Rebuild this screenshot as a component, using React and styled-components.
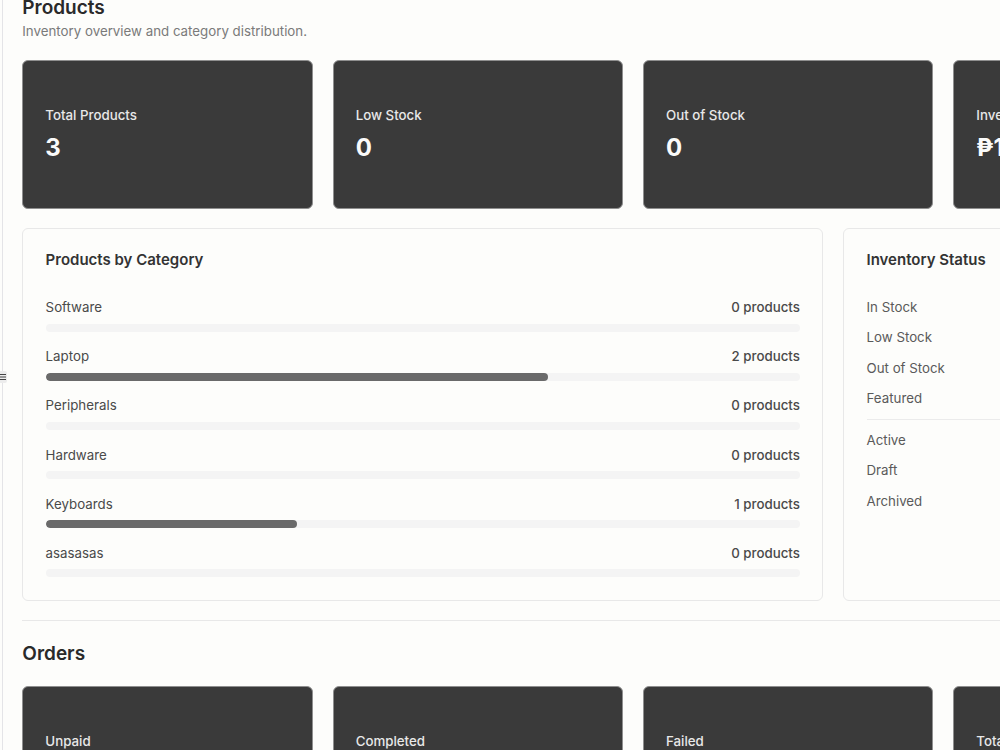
import React from "react";
import styled, { createGlobalStyle } from "styled-components";

const Global = createGlobalStyle`
  html, body { margin: 0; padding: 0; height: 100%; overflow: hidden; background: #fdfdfb; }
  body { font-family: Inter, "Noto Sans", sans-serif; color: #2a2a2a; }
  * { box-sizing: border-box; }
`;

const Shell = styled.div`
  display: flex;
  width: 1000px;
  height: 750px;
  overflow: hidden;
`;
const Rail = styled.aside`
  position: relative;
  flex: 0 0 3px;
  border-right: 1px solid #e4e4e7;
`;
const Grip = styled.span`
  position: absolute;
  left: -1px;
  top: 371px;
  width: 8px;
  height: 12px;
  background: #ececec;
  border-radius: 2px;
  display: flex;
  align-items: center;
  justify-content: center;
  z-index: 2;
`;
const Main = styled.main`
  flex: 0 0 1240.7px;
  width: 1240.7px;
  padding: 0 0 0 19.3px;
  margin-top: -6px;
`;
const Title = styled.h2`
  margin: 0 0 -1px;
  font-size: 19px;
  line-height: 28px;
  font-weight: 600;
  color: #2a2a2a;
`;
const Sub = styled.p`
  margin: 0 0 19px;
  font-size: 13.3px;
  line-height: 20px;
  color: #7a7a7a;
`;
const StatGrid = styled.div`
  display: grid;
  grid-template-columns: repeat(4, 1fr);
  gap: 20px;
`;
const StatCard = styled.div`
  height: 149px;
  background: #3a3a3a;
  border: 1px solid #8f8f8f;
  border-radius: 6px;
  padding: 0 22px;
  display: flex;
  flex-direction: column;
  justify-content: center;
  color: #fafafa;
`;
const StatLabel = styled.div`
  font-size: 13.3px;
  line-height: 20px;
  font-weight: 500;
  color: #e8e8e8;
`;
const StatValue = styled.div`
  margin-top: 7px;
  font-size: 24px;
  line-height: 32px;
  font-weight: 700;
  color: #fafafa;
`;
const Panels = styled.div`
  display: grid;
  grid-template-columns: 2fr 1fr;
  gap: 20px;
  margin-top: 19px;
`;
const Panel = styled.section`
  height: 373px;
  background: #fdfdfb;
  border: 1px solid #e8e8e8;
  border-radius: 6px;
  padding: 20px 22.3px;
`;
const PanelTitle = styled.h3`
  margin: 0 0 26px;
  font-size: 15px;
  line-height: 22px;
  font-weight: 600;
  color: #333333;
`;
const CatList = styled.div`
  display: flex;
  flex-direction: column;
  gap: 14.7px;
`;
const CatRow = styled.div`
  display: flex;
  justify-content: space-between;
  font-size: 13.3px;
  line-height: 20px;
  color: #4a4a4a;
  margin-bottom: 6.5px;
`;
const CatCount = styled.span`
  font-weight: 500;
`;
const Track = styled.div`
  height: 8px;
  border-radius: 4px;
  background: #f4f4f4;
  overflow: hidden;
`;
const Fill = styled.div`
  height: 100%;
  border-radius: 4px;
  background: #6a6a6a;
`;
const StatusList = styled.div`
  display: flex;
  flex-direction: column;
  gap: 10.4px;
`;
const StatusRow = styled.div`
  display: flex;
  justify-content: space-between;
  font-size: 13.3px;
  line-height: 20px;
  color: #5a5a5a;
`;
const StatusRule = styled.hr`
  width: 100%;
  margin: 0;
  border: 0;
  border-top: 1px solid #ebebeb;
`;
const Divider = styled.hr`
  margin: 19px 0 19px;
  border: 0;
  border-top: 1px solid #e8e8e8;
`;
const OrdersTitle = styled.h2`
  margin: 0 0 18px;
  font-size: 19px;
  line-height: 28px;
  font-weight: 600;
  color: #2a2a2a;
`;

const productStats = [
  ["Total Products", "3"],
  ["Low Stock", "0"],
  ["Out of Stock", "0"],
  ["Inventory Value", "₱12,000"],
];
const orderStats = [
  ["Unpaid", "0"],
  ["Completed", "0"],
  ["Failed", "0"],
  ["Total Orders", "0"],
];
const categories = [
  ["Software", 0],
  ["Laptop", 2],
  ["Peripherals", 0],
  ["Hardware", 0],
  ["Keyboards", 1],
  ["asasasas", 0],
];
const statusTop = [["In Stock", 3], ["Low Stock", 0], ["Out of Stock", 0], ["Featured", 0]];
const statusBottom = [["Active", 3], ["Draft", 0], ["Archived", 0]];

const Stats = ({ items }) => (
  <StatGrid>
    {items.map(([label, value]) => (
      <StatCard key={label}>
        <StatLabel>{label}</StatLabel>
        <StatValue>{value}</StatValue>
      </StatCard>
    ))}
  </StatGrid>
);

export default function App() {
  return (
    <Shell>
      <Global />
      <Rail>
        <Grip>
          <svg width="6" height="8" viewBox="0 0 6 8" fill="none" stroke="#444" strokeWidth="1">
            <path d="M0 1.5h6M0 4h6M0 6.5h6" />
          </svg>
        </Grip>
      </Rail>
      <Main>
        <Title>Products</Title>
        <Sub>Inventory overview and category distribution.</Sub>
        <Stats items={productStats} />
        <Panels>
          <Panel>
            <PanelTitle>Products by Category</PanelTitle>
            <CatList>
              {categories.map(([name, n]) => (
                <div key={name}>
                  <CatRow>
                    <span>{name}</span>
                    <CatCount>{n} products</CatCount>
                  </CatRow>
                  <Track>
                    <Fill style={{ width: `${(n / 3) * 100}%` }} />
                  </Track>
                </div>
              ))}
            </CatList>
          </Panel>
          <Panel>
            <PanelTitle>Inventory Status</PanelTitle>
            <StatusList>
              {statusTop.map(([k, v]) => (
                <StatusRow key={k}><span>{k}</span><span>{v}</span></StatusRow>
              ))}
              <StatusRule />
              {statusBottom.map(([k, v]) => (
                <StatusRow key={k}><span>{k}</span><span>{v}</span></StatusRow>
              ))}
            </StatusList>
          </Panel>
        </Panels>
        <Divider />
        <OrdersTitle>Orders</OrdersTitle>
        <Stats items={orderStats} />
      </Main>
    </Shell>
  );
}
